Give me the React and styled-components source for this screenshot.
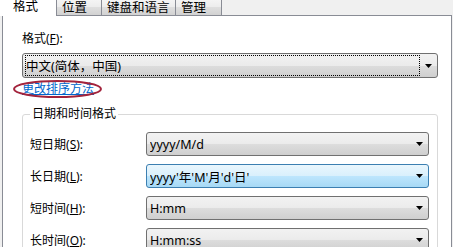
import React from 'react';
import styled, { createGlobalStyle } from 'styled-components';

const GlobalStyle = createGlobalStyle`
  html, body {
    margin: 0;
    padding: 0;
    background: #f0f0f0;
  }
  body {
    font-family: "Noto Sans", "Noto Sans CJK SC", sans-serif;
    font-size: 12px;
    color: #000;
  }
`;

const Dialog = styled.div`
  width: 453px;
  height: 247px;
  overflow: hidden;
  background: #f0f0f0;
`;

const TabStrip = styled.div`
  display: flex;
  align-items: flex-start;
  height: 15px;
`;

const Tab = styled.div`
  position: relative;
  z-index: ${({ active }) => (active ? 2 : 1)};
  box-sizing: border-box;
  width: ${({ w }) => w}px;
  height: ${({ active }) => (active ? 16 : 15)}px;
  padding-left: ${({ active }) => (active ? 13 : 5)}px;
  border-right: 1px solid #898c95;
  background: ${({ active }) => (active
    ? '#fff'
    : 'linear-gradient(#f4f4f4, #ececec 50%, #dedede 50%, #d2d2d2)')};
  font-size: 12.5px;
  line-height: ${({ active }) => (active ? 13 : 16)}px;
  white-space: nowrap;
`;

const Panel = styled.div`
  box-sizing: border-box;
  width: 450px;
  height: 232px;
  margin-left: 2px;
  padding: 15px 13px 0 19px;
  border: 1px solid #898c95;
  border-bottom: none;
  background: #fff;
  overflow: hidden;
  display: flex;
  flex-direction: column;
`;

const FieldLabel = styled.div`
  line-height: 16px;
`;

const Combo = styled.div`
  box-sizing: border-box;
  display: flex;
  align-items: stretch;
  height: ${({ h }) => h || 24}px;
  margin-top: ${({ mt }) => mt || 0}px;
  border: 1px solid ${({ hot }) => (hot ? '#3c7fb1' : '#707070')};
  border-radius: 3px;
  background: ${({ hot }) => (hot
    ? 'linear-gradient(#eaf6fd, #d9f0fc 50%, #bee6fd 50%, #a7d9f5)'
    : 'linear-gradient(#f2f2f2, #ebebeb 50%, #dddddd 50%, #cfcfcf)')};
`;

const Value = styled.div`
  flex: 1;
  display: flex;
  align-items: center;
  margin: 1px 0 1px 2px;
  border: 1px ${({ focused }) => (focused ? 'dotted #000' : 'solid transparent')};
  font-size: 12.5px;
  white-space: nowrap;
  overflow: hidden;
`;

const ArrowBox = styled.div`
  width: 17px;
  display: flex;
  align-items: center;
  justify-content: center;
`;

const LinkRow = styled.div`
  position: relative;
  align-self: flex-start;
  margin-top: 3px;
  line-height: 16px;
`;

const Link = styled.a`
  color: #0066cc;
  text-decoration: underline;
  cursor: pointer;
`;

const Mark = styled.svg`
  position: absolute;
  left: -9px;
  top: -1px;
  pointer-events: none;
`;

const Group = styled.fieldset`
  margin: 9px 0 0;
  padding: 10px 8px 20px 7px;
  min-width: 0;
  border: 1px solid #d9d9d9;
  border-radius: 3px;
  display: flex;
  flex-direction: column;
  gap: 8px;
`;

const Legend = styled.legend`
  padding: 0 2px;
  line-height: 16px;
`;

const Row = styled.div`
  display: flex;
  align-items: center;
`;

const RowLabel = styled.div`
  width: 116px;
  flex-shrink: 0;
`;

const RowCombo = styled(Combo)`
  flex: 1;
`;

function Arrow() {
  return (
    <ArrowBox>
      <svg width="7" height="4" viewBox="0 0 7 4">
        <polygon points="0,0 7,0 3.5,4" fill="#000" />
      </svg>
    </ArrowBox>
  );
}

const rows = [
  { label: '短日期', key: 'S', value: 'yyyy/M/d' },
  { label: '长日期', key: 'L', value: "yyyy'年'M'月'd'日'", hot: true },
  { label: '短时间', key: 'H', value: 'H:mm' },
  { label: '长时间', key: 'O', value: 'H:mm:ss' },
];

export default function App() {
  return (
    <Dialog>
      <GlobalStyle />
      <TabStrip>
        <Tab active w={57}>格式</Tab>
        <Tab w={45}>位置</Tab>
        <Tab w={74}>键盘和语言</Tab>
        <Tab w={46}>管理</Tab>
      </TabStrip>
      <Panel>
        <FieldLabel>格式(<u>F</u>):</FieldLabel>
        <Combo h={25} mt={6}>
          <Value focused>中文(简体，中国)</Value>
          <Arrow />
        </Combo>
        <LinkRow>
          <Link>更改排序方法</Link>
          <Mark width="89" height="18" viewBox="0 0 89 18">
            <ellipse cx="44.5" cy="9" rx="43.5" ry="8" fill="none" stroke="#a3243c" strokeWidth="2" />
          </Mark>
        </LinkRow>
        <Group>
          <Legend>日期和时间格式</Legend>
          {rows.map((r) => (
            <Row key={r.key}>
              <RowLabel>{r.label}(<u>{r.key}</u>):</RowLabel>
              <RowCombo hot={r.hot}>
                <Value>{r.value}</Value>
                <Arrow />
              </RowCombo>
            </Row>
          ))}
        </Group>
      </Panel>
    </Dialog>
  );
}
